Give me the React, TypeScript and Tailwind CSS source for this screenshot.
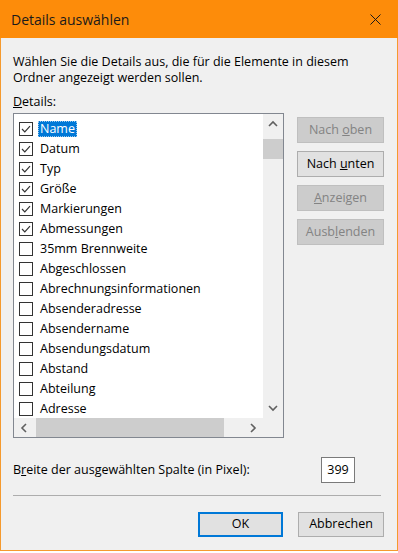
import React from "react";

const items: { label: string; checked: boolean }[] = [
    { label: "Name", checked: true },
    { label: "Datum", checked: true },
    { label: "Typ", checked: true },
    { label: "Größe", checked: true },
    { label: "Markierungen", checked: true },
    { label: "Abmessungen", checked: true },
    { label: "35mm Brennweite", checked: false },
    { label: "Abgeschlossen", checked: false },
    { label: "Abrechnungsinformationen", checked: false },
    { label: "Absenderadresse", checked: false },
    { label: "Absendername", checked: false },
    { label: "Absendungsdatum", checked: false },
    { label: "Abstand", checked: false },
    { label: "Abteilung", checked: false },
    { label: "Adresse", checked: false },
];

const Chevron = ({ dir }: { dir: "up" | "down" | "left" | "right" }) => {
    const paths: Record<string, string> = {
        up: "M1 6 L5 2 L9 6",
        down: "M1 2 L5 6 L9 2",
        left: "M6 1 L2 5 L6 9",
        right: "M2 1 L6 5 L2 9",
    };
    const horizontal = dir === "up" || dir === "down";
    return (
        <svg width={horizontal ? 10 : 8} height={horizontal ? 8 : 10} viewBox={horizontal ? "0 0 10 8" : "0 0 8 10"}>
            <path d={paths[dir]} fill="none" stroke="#606060" strokeWidth="1.6" />
        </svg>
    );
};

const CheckBox = ({ checked }: { checked: boolean }) => (
    <span className="flex h-[14px] w-[14px] shrink-0 items-center justify-center border border-[#333333] bg-white">
        {checked && (
            <svg width="10" height="8" viewBox="0 0 10 8">
                <path d="M1 4 L3.8 6.8 L9 1.2" fill="none" stroke="#333333" strokeWidth="1.2" />
            </svg>
        )}
    </span>
);

const SideButton = ({ children, disabled }: { children: React.ReactNode; disabled?: boolean }) => (
    <div
        className={
            disabled
                ? "flex h-[26px] w-[87px] items-center justify-center border border-[#bfbfbf] bg-[#cccccc] text-[#838383]"
                : "flex h-[26px] w-[87px] items-center justify-center border border-[#adadad] bg-[#e1e1e1] text-black"
        }
    >
        {children}
    </div>
);

export default function App() {
    return (
        <div className="h-[553px] w-[398px] bg-white font-['Open_Sans','Noto_Sans',sans-serif] text-[12.5px] text-black">
            <div className="flex h-[38px] items-center justify-between bg-[#fd8c0a] pl-[11px] pr-[17px]">
                <span className="text-[14px] text-[#1a1a1a]">Details auswählen</span>
                <svg width="11" height="11" viewBox="0 0 11 11">
                    <path d="M0.5 0.5 L10.5 10.5 M10.5 0.5 L0.5 10.5" stroke="#1a1a1a" strokeWidth="1" />
                </svg>
            </div>

            <div className="flex h-[513px] flex-col border-x border-b border-[#f59a2e] bg-[#f0f0f0] pl-[12px] pr-[13px] pt-[16px]">
                <p className="leading-[16px]">
                    Wählen Sie die Details aus, die für die Elemente in diesem
                    <br />
                    Ordner angezeigt werden sollen.
                </p>
                <p className="mt-[8px] leading-[16px]">
                    <span className="underline">D</span>etails:
                </p>

                <div className="mt-[3px] flex gap-[13px]">
                    <div className="flex h-[325px] w-[271px] flex-col border border-[#828790] bg-white">
                        <div className="flex h-[304px]">
                            <ul className="flex-1 overflow-hidden pl-[5px] pt-[5px]">
                                {items.map((item, i) => (
                                    <li key={item.label} className="flex h-[20px] items-center gap-[5px]">
                                        <CheckBox checked={item.checked} />
                                        <span
                                            className={
                                                i === 0
                                                    ? "border border-dotted border-[#99c9ef] bg-[#0078d7] px-[1px] leading-[14px] text-white"
                                                    : "px-[2px] leading-[14px]"
                                            }
                                        >
                                            {item.label}
                                        </span>
                                    </li>
                                ))}
                            </ul>
                            <div className="flex w-[20px] flex-col bg-[#f0f0f0]">
                                <div className="flex h-[20px] items-center justify-center">
                                    <Chevron dir="up" />
                                </div>
                                <div className="mt-[5px] h-[20px] bg-[#cdcdcd]" />
                                <div className="flex-1" />
                                <div className="flex h-[20px] items-center justify-center">
                                    <Chevron dir="down" />
                                </div>
                            </div>
                        </div>
                        <div className="flex h-[19px] bg-[#f0f0f0]">
                            <div className="flex w-[20px] items-center justify-center">
                                <Chevron dir="left" />
                            </div>
                            <div className="ml-[2px] w-[188px] bg-[#cdcdcd]" />
                            <div className="flex-1" />
                            <div className="flex w-[20px] items-center justify-center">
                                <Chevron dir="right" />
                            </div>
                            <div className="w-[20px]" />
                        </div>
                    </div>

                    <div className="flex flex-col gap-[8px] pt-[4px]">
                        <SideButton disabled>
                            <span>
                                Nach <span className="underline">o</span>ben
                            </span>
                        </SideButton>
                        <SideButton>
                            <span>
                                Nach <span className="underline">u</span>nten
                            </span>
                        </SideButton>
                        <SideButton disabled>
                            <span>
                                <span className="underline">A</span>nzeigen
                            </span>
                        </SideButton>
                        <SideButton disabled>
                            <span>
                                Ausb<span className="underline">l</span>enden
                            </span>
                        </SideButton>
                    </div>
                </div>

                <div className="mt-[19px] flex h-[26px] items-center justify-between pr-[29px]">
                    <span>
                        B<span className="underline">r</span>eite der ausgewählten Spalte (in Pixel):
                    </span>
                    <div className="flex h-[26px] w-[34px] items-center justify-center border border-[#7a7a7a] bg-white">
                        399
                    </div>
                </div>

                <div className="mt-[12px] mr-[3px] border-t border-[#adadad]" />

                <div className="mt-[16px] flex justify-end gap-[15px]">
                    <div className="flex h-[25px] w-[85px] items-center justify-center border-2 border-[#0078d7] bg-[#e1e1e1]">
                        OK
                    </div>
                    <div className="flex h-[25px] w-[86px] items-center justify-center border border-[#adadad] bg-[#e1e1e1]">
                        Abbrechen
                    </div>
                </div>
            </div>
        </div>
    );
}
